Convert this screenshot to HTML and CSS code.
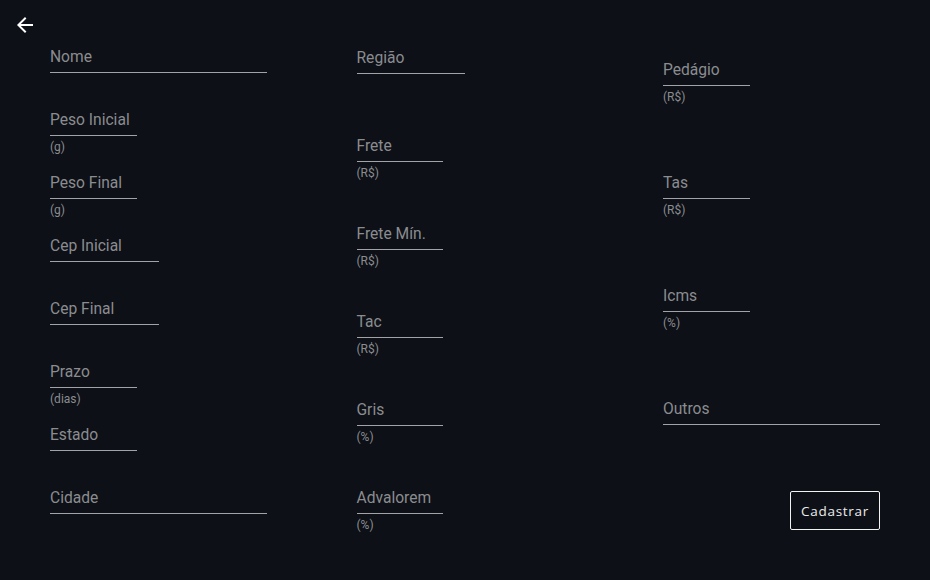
FILE: index.html
```html
<!DOCTYPE html>
<html lang="pt-BR">
<head>
<meta charset="utf-8">
<title>Cadastro</title>
<link rel="stylesheet" href="styles.css">
</head>
<body>
<header class="top">
  <button class="back" aria-label="Voltar">
    <svg viewBox="0 0 24 24" width="24" height="24"><path d="M20 11H7.83l5.59-5.59L12 4l-8 8 8 8 1.41-1.41L7.83 13H20v-2z" fill="currentColor"/></svg>
  </button>
</header>
<main class="form">
  <section class="col col-1">
    <div class="field w-full"><div class="input">Nome</div></div>
    <div class="field w-40"><div class="input">Peso Inicial</div><div class="helper">(g)</div></div>
    <div class="field w-40"><div class="input">Peso Final</div><div class="helper">(g)</div></div>
    <div class="field w-50"><div class="input">Cep Inicial</div></div>
    <div class="field w-50"><div class="input">Cep Final</div></div>
    <div class="field w-40"><div class="input">Prazo</div><div class="helper">(dias)</div></div>
    <div class="field w-40"><div class="input">Estado</div></div>
    <div class="field w-full"><div class="input">Cidade</div></div>
  </section>
  <section class="col col-2">
    <div class="field w-50"><div class="input">Região</div></div>
    <div class="field w-40"><div class="input">Frete</div><div class="helper">(R$)</div></div>
    <div class="field w-40"><div class="input">Frete Mín.</div><div class="helper">(R$)</div></div>
    <div class="field w-40"><div class="input">Tac</div><div class="helper">(R$)</div></div>
    <div class="field w-40"><div class="input">Gris</div><div class="helper">(%)</div></div>
    <div class="field w-40"><div class="input">Advalorem</div><div class="helper">(%)</div></div>
  </section>
  <section class="col col-3">
    <div class="field w-40"><div class="input">Pedágio</div><div class="helper">(R$)</div></div>
    <div class="field w-40"><div class="input">Tas</div><div class="helper">(R$)</div></div>
    <div class="field w-40"><div class="input">Icms</div><div class="helper">(%)</div></div>
    <div class="field w-full"><div class="input">Outros</div></div>
    <div class="actions"><button class="submit">Cadastrar</button></div>
  </section>
</main>
</body>
</html>
```
FILE: styles.css
```css
html, body {
  margin: 0;
  padding: 0;
  background: #0d1017;
  height: 100%;
}
body {
  font-family: Roboto, "Liberation Sans", sans-serif;
  color: #8b8c8f;
}
.top {
  height: 43px;
  display: flex;
  align-items: flex-start;
}
.back {
  margin: 13px 0 0 13px;
  padding: 0;
  border: 0;
  background: none;
  color: #ffffff;
  width: 24px;
  height: 24px;
  display: block;
}
.back svg { display: block; }
.form {
  display: flex;
  justify-content: space-between;
  padding: 0 50px;
}
.col {
  width: 217px;
  display: flex;
  flex-direction: column;
}
.col-1 { gap: 17px; }
.col-2 { gap: 42px; padding-top: 1px; }
.col-3 { padding-top: 13px; }
.col-3 .field + .field { margin-top: 67px; }
.field {
  height: 46px;
}
.w-full { width: 100%; }
.w-50 { width: 50%; }
.w-40 { width: 40%; }
.input {
  box-sizing: content-box;
  padding-top: 5px;
  height: 24px;
  font-size: 15.6px;
  line-height: 19px;
  border-bottom: 1px solid #a2a3a6;
  white-space: nowrap;
}
.helper {
  margin-top: 4px;
  font-size: 12px;
  line-height: 14px;
  color: #8b8c8f;
}
.actions {
  margin-top: 50px;
  display: flex;
  justify-content: flex-end;
}
.submit {
  width: 90px;
  height: 39px;
  background: transparent;
  border: 1px solid #f2f2f2;
  border-radius: 2px;
  color: #ececec;
  font-family: "Open Sans", sans-serif;
  font-size: 13.5px;
  font-weight: 500;
  letter-spacing: 0.7px;
  padding: 0;
}
```
